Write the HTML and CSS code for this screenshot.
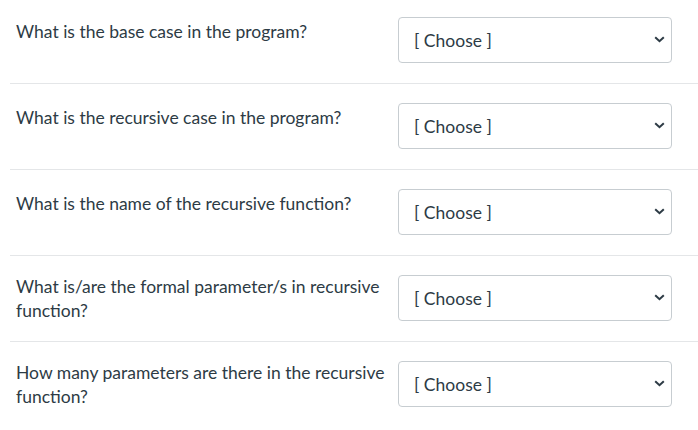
FILE: index.html
```html
<!DOCTYPE html>
<html lang="en">
<head>
    <meta charset="UTF-8">
    <meta name="viewport" content="width=device-width, initial-scale=1.0">
    <title>Quiz - Recursion</title>
    <link rel="stylesheet" href="styles.css">
</head>
<body>
    <div class="quiz">
        <div class="row">
            <div class="question">What is the base case in the program?</div>
            <div class="answer">
                <select><option>[ Choose ]</option></select>
                <svg class="chevron" width="11" height="7" viewBox="0 0 11 7"><path d="M1.2 1.2 L5.5 5.2 L9.8 1.2" fill="none" stroke="#2d3b45" stroke-width="2"/></svg>
            </div>
        </div>
        <div class="row">
            <div class="question">What is the recursive case in the program?</div>
            <div class="answer">
                <select><option>[ Choose ]</option></select>
                <svg class="chevron" width="11" height="7" viewBox="0 0 11 7"><path d="M1.2 1.2 L5.5 5.2 L9.8 1.2" fill="none" stroke="#2d3b45" stroke-width="2"/></svg>
            </div>
        </div>
        <div class="row">
            <div class="question">What is the name of the recursive function?</div>
            <div class="answer">
                <select><option>[ Choose ]</option></select>
                <svg class="chevron" width="11" height="7" viewBox="0 0 11 7"><path d="M1.2 1.2 L5.5 5.2 L9.8 1.2" fill="none" stroke="#2d3b45" stroke-width="2"/></svg>
            </div>
        </div>
        <div class="row">
            <div class="question wrap">What is/are the formal parameter/s in recursive function?</div>
            <div class="answer">
                <select><option>[ Choose ]</option></select>
                <svg class="chevron" width="11" height="7" viewBox="0 0 11 7"><path d="M1.2 1.2 L5.5 5.2 L9.8 1.2" fill="none" stroke="#2d3b45" stroke-width="2"/></svg>
            </div>
        </div>
        <div class="row">
            <div class="question wrap">How many parameters are there in the recursive function?</div>
            <div class="answer">
                <select><option>[ Choose ]</option></select>
                <svg class="chevron" width="11" height="7" viewBox="0 0 11 7"><path d="M1.2 1.2 L5.5 5.2 L9.8 1.2" fill="none" stroke="#2d3b45" stroke-width="2"/></svg>
            </div>
        </div>
    </div>
</body>
</html>
```

FILE: styles.css
```css
body {
    margin: 0;
    font-family: Lato, "Open Sans", sans-serif;
    font-size: 17.5px;
    color: #2d3b45;
    background: #fff;
}
.quiz {
    margin-top: -2px;
    margin-left: 10px;
}
.row {
    display: flex;
    gap: 8px;
    padding: 19px 26px 20px 6px;
    border-bottom: 1px solid #e4e6e8;
}
.row:last-child {
    border-bottom: none;
}
.question {
    flex: 1;
    line-height: 24px;
    margin-top: 3px;
}
.question.wrap {
    margin: 0 0 -2px;
}
.answer {
    position: relative;
    width: 274px;
    flex: none;
}
.answer select {
    appearance: none;
    -webkit-appearance: none;
    width: 100%;
    height: 46px;
    padding: 0 30px 0 15px;
    border: 1px solid #c7cdd1;
    border-radius: 4px;
    background: #fff;
    font-family: inherit;
    font-size: 17.5px;
    color: #2d3b45;
}
.chevron {
    position: absolute;
    right: 7px;
    top: 19px;
}
```
